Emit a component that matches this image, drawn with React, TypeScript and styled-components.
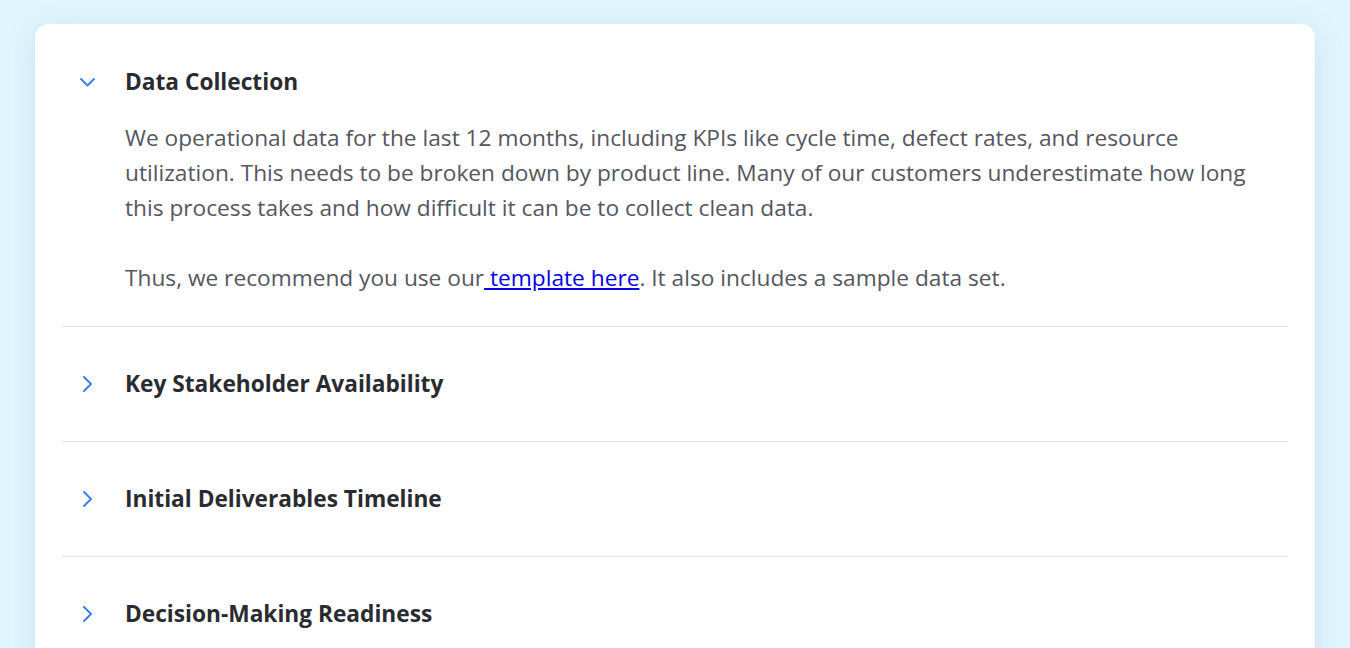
import React, { useState } from "react";
import styled, { createGlobalStyle } from "styled-components";

const GlobalStyle = createGlobalStyle`
  html, body {
    margin: 0;
    padding: 0;
    background: #e1f5fd;
    font-family: "Open Sans", "Noto Sans", sans-serif;
  }
`;

interface Item {
  title: string;
  body?: React.ReactNode;
}

const items: Item[] = [
  {
    title: "Data Collection",
    body: (
      <>
        <p>
          We operational data for the last 12 months, including KPIs like cycle
          time, defect rates, and resource utilization. This needs to be broken
          down by product line. Many of our customers underestimate how long
          this process takes and how difficult it can be to collect clean data.
        </p>
        <p>
          Thus, we recommend you use our
          <a href="#template"> template here</a>. It also includes a sample
          data set.
        </p>
      </>
    ),
  },
  { title: "Key Stakeholder Availability" },
  { title: "Initial Deliverables Timeline" },
  { title: "Decision-Making Readiness" },
];

const Chevron = ({ open }: { open: boolean }) => (
  <svg width="24" height="24" viewBox="0 0 24 24" fill="none">
    <path
      d={open ? "M6 9 12.5 15.5 19 9" : "M9 5 16 12 9 19"}
      stroke="#3b80f3"
      strokeWidth="2"
      strokeLinecap="round"
      strokeLinejoin="round"
    />
  </svg>
);

const App = () => {
  const [openIndex, setOpenIndex] = useState<number | null>(0);

  return (
    <>
      <GlobalStyle />
      <Page>
        <Card>
          {items.map((item, i) => {
            const open = openIndex === i;
            return (
              <Row key={item.title}>
                <Header
                  $open={open}
                  onClick={() => setOpenIndex(open ? null : i)}
                >
                  <IconBox>
                    <Chevron open={open} />
                  </IconBox>
                  <Title>{item.title}</Title>
                </Header>
                {open && item.body && <Body>{item.body}</Body>}
              </Row>
            );
          })}
        </Card>
      </Page>
    </>
  );
};

export default App;

const Page = styled.div`
  padding: 24px 35px 0;
  height: 648px;
  box-sizing: border-box;
  overflow: hidden;
`;

const Card = styled.div`
  background: #fff;
  border-radius: 14px;
  padding: 1px 27px 40px;
  box-shadow: 0 6px 30px rgba(60, 140, 180, 0.16);
`;

const Row = styled.div`
  & + & {
    border-top: 1px solid #e1e1e6;
  }
`;

const Header = styled.div<{ $open: boolean }>`
  display: flex;
  align-items: center;
  gap: 26px;
  padding: 39px 0 ${(p) => (p.$open ? "0" : "39px")} 13px;
  cursor: pointer;
`;

const IconBox = styled.span`
  display: flex;
  align-items: center;
  justify-content: center;
  width: 24px;
  height: 24px;
`;

const Title = styled.h3`
  margin: 0;
  font-size: 22.7px;
  line-height: 36px;
  font-weight: 700;
  color: #2a2b31;
`;

const Body = styled.div`
  padding: 20px 20px 31px 63px;
  font-size: 22.7px;
  line-height: 35px;
  color: #55565e;

  p {
    margin: 0;
  }

  p + p {
    margin-top: 35px;
  }

  a {
    color: #0000ee;
    text-decoration: underline;
  }
`;
